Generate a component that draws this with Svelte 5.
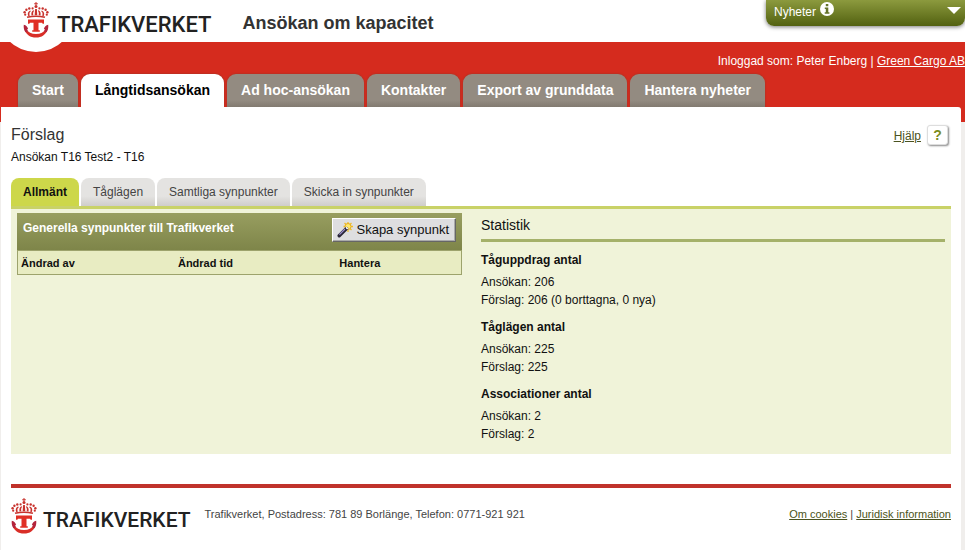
<script>
  const mainTabs = ['Start', 'Långtidsansökan', 'Ad hoc-ansökan', 'Kontakter', 'Export av grunddata', 'Hantera nyheter'];
  const subTabs = ['Allmänt', 'Tåglägen', 'Samtliga synpunkter', 'Skicka in synpunkter'];
  const stats = [
    { title: 'Tåguppdrag antal', rows: ['Ansökan: 206', 'Förslag: 206 (0 borttagna, 0 nya)'] },
    { title: 'Tåglägen antal', rows: ['Ansökan: 225', 'Förslag: 225'] },
    { title: 'Associationer antal', rows: ['Ansökan: 2', 'Förslag: 2'] }
  ];
  let mainActive = $state(1);
  let subActive = $state(0);
</script>

{#snippet crest()}
  <svg class="crest" viewBox="0 0 26 36" width="26" height="36" aria-hidden="true">
    <g fill="#c8322d">
      <path d="M12.500 0h1v1.300h1.300v1h-1.300v1.200h-1V2.300h-1.300v-1h1.300z" />
      <circle cx="13" cy="4.600" r="1.500" />
      <circle cx="9.600" cy="6.400" r="1.100" /><circle cx="16.400" cy="6.400" r="1.100" />
      <circle cx="6.300" cy="6.500" r="1.200" /><circle cx="19.700" cy="6.500" r="1.200" />
      <circle cx="3.400" cy="7.800" r="1.200" /><circle cx="22.600" cy="7.800" r="1.200" />
      <circle cx="1.600" cy="10.200" r="1.200" /><circle cx="24.400" cy="10.200" r="1.200" />
      <circle cx="2.200" cy="12.700" r="1.100" /><circle cx="23.800" cy="12.700" r="1.100" />
      <path d="M12.100 7h1.800l.4 6.300h-2.600z" />
      <path d="M10.200 8.300C8.500 9.500 8 11.500 8.600 13.500l1.800-.2c-.5-1.600-.4-3.400.8-4.600zM15.800 8.300c1.700 1.200 2.200 3.200 1.600 5.200l-1.800-.2c.5-1.600.4-3.400-.8-4.600z" />
      <path d="M7.200 8.600c-2.200.9-3 3-2 5.400l1.700-.3c-.9-1.800-.6-3.600 1-4.500zM18.800 8.600c2.200.9 3 3 2 5.400l-1.700-.3c.9-1.800.6-3.600-1-4.500z" />
      <path d="M3.800 14.500c5.800-1.500 12.600-1.500 18.400 0l-.5 1.500c-5.500-1.200-11.900-1.200-17.400 0z" />
    </g>
    <path d="M5 17.600h16v4.200h-1.300l-.7-1h-3.500v7.400h1.300v1.600H9.200v-1.600h1.300v-7.400H7l-.7 1H5z" fill="#e02f25" />
    <path d="M2.500 26.500c2.600 3.900 6.100 5.500 10.500 5.500s7.900-1.600 10.500-5.500l1 1C22.800 32.700 18.800 35.600 13 35.600S3.200 32.700 1.500 27.500z" fill="#d92e27" />
    <path d="M.8 22.800c2.300.5 3.800 1.900 4.300 4.200l-1 .2.900 2-2.600 1C1 28 .4 25.500.8 22.800zM25.200 22.800c-2.300.5-3.800 1.900-4.300 4.200l1 .2-.9 2 2.600 1c1.400-2.200 2-4.700 1.600-7.400z" fill="#b3243c" />
  </svg>
{/snippet}

<div class="app">
  <header>
    <div class="top">
      <a class="logo" href="#start">{@render crest()}<span>TRAFIKVERKET</span></a>
      <h1>Ansökan om kapacitet</h1>
      <button class="news">
        <span>Nyheter</span>
        <svg width="14" height="14" viewBox="0 0 14 14" aria-hidden="true">
          <circle cx="7" cy="7" r="7" fill="#fff" />
          <path d="M5.800 2h2.500v2.200H5.800zM4.800 5.400h3.500v4.800h1.100v1.500H4.700v-1.500h1.100V6.900h-1z" fill="#65732a" />
        </svg>
        <svg class="arrow" width="14" height="7" viewBox="0 0 14 7" aria-hidden="true"><path d="M0 0h14L7 7z" fill="#fff" /></svg>
      </button>
    </div>
    <div class="band">
      <p class="user">Inloggad som: Peter Enberg | <a href="#foretag">Green Cargo AB</a></p>
      <nav class="main-tabs">
        {#each mainTabs as tab, i}
          <button class:active={mainActive === i} onclick={() => (mainActive = i)}>{tab}</button>
        {/each}
      </nav>
    </div>
  </header>

  <div class="page">
    <main>
      <div class="heading">
        <div>
          <h2>Förslag</h2>
          <p>Ansökan T16 Test2 - T16</p>
        </div>
        <div class="help"><a href="#hjalp">Hjälp</a><button aria-label="Visa hjälp">?</button></div>
      </div>

      <nav class="sub-tabs">
        {#each subTabs as tab, i}
          <button class:active={subActive === i} onclick={() => (subActive = i)}>{tab}</button>
        {/each}
      </nav>

      <div class="panel">
        <section class="comments">
          <div class="bar">
            <h3>Generella synpunkter till Trafikverket</h3>
            <button class="create">
              <svg width="16" height="16" viewBox="0 0 16 16" aria-hidden="true">
                <path d="M11 0v10M6.500 4.500h9.500M7.500 1l7 7M14.500 1l-7 7" stroke="#f0bd2c" stroke-width="1.300" />
                <circle cx="11" cy="4.500" r="3" fill="#ffe96a" stroke="#e6ac20" />
                <path d="M2.200 13.800l7.300-7.300" stroke="#292638" stroke-width="3.400" stroke-linecap="round" />
                <path d="M2.400 12.600l5.600-5.600" stroke="#9c8fd0" stroke-width="1.200" />
                <path d="M9.300 6.700l1.200-1.200" stroke="#fff" stroke-width="2.400" />
              </svg>
              <span>Skapa synpunkt</span>
            </button>
          </div>
          <table>
            <thead><tr><th>Ändrad av</th><th>Ändrad tid</th><th>Hantera</th></tr></thead>
          </table>
        </section>

        <section class="stats">
          <h2>Statistik</h2>
          {#each stats as group}
            <div class="group">
              <h3>{group.title}</h3>
              {#each group.rows as row}<p>{row}</p>{/each}
            </div>
          {/each}
        </section>
      </div>
    </main>

    <footer>
      <a class="logo small" href="#start">{@render crest()}<span>TRAFIKVERKET</span></a>
      <p>Trafikverket, Postadress: 781 89 Borlänge, Telefon: 0771-921 921</p>
      <p class="links"><a href="#cookies">Om cookies</a> | <a href="#juridisk">Juridisk information</a></p>
    </footer>
  </div>
</div>

<style>
  :global(body) { margin: 0; background: #f0eeec; overflow-x: hidden; }
  .app { font: 12px/18px "Liberation Sans", Arial, sans-serif; color: #111; min-height: 100vh; display: flex; flex-direction: column; }
  h1, h2, h3, p { margin: 0; }
  button { font: inherit; color: inherit; border: 0; margin: 0; padding: 0; cursor: pointer; }
  .crest { display: block; flex: none; }

  .top { display: flex; height: 42px; background: #fff; }
  .logo { position: relative; display: flex; gap: 8px; padding: 2px 0 0 23px; color: #222; text-decoration: none; font: 500 22px/46px Roboto, sans-serif; }
  .logo::before { content: ""; position: absolute; left: -3px; top: -26px; width: 78px; height: 78px; border-radius: 50%; background: #fff; }
  .logo > span, .logo :global(svg) { position: relative; }
  h1 { margin-left: 31px; font-size: 18px; line-height: 46px; color: #333; }
  .news { display: flex; gap: 4px; align-items: flex-start; margin-left: auto; width: 199px; height: 26px; padding: 2px 4px 0 8px; color: #fff; background: linear-gradient(#8c9a3e, #526110); border-radius: 0 0 8px 8px; box-shadow: 0 1px 4px #777; line-height: 20px; }
  .arrow { margin: 5px 0 0 auto; }

  .band { background: #d52b1e; height: 80px; }
  .user { color: #fff; text-align: right; padding-top: 10px; height: 22px; white-space: nowrap; }
  .user a { color: #fff; }
  .main-tabs { display: flex; gap: 3px; padding-left: 18px; }
  .main-tabs button { height: 33px; padding: 0 14px 2px; font-size: 14px; font-weight: bold; color: #fff; background: linear-gradient(#938b81 80%, #827a70); border-radius: 9px 9px 0 0; box-shadow: 0 0 2px #8a3a2a; white-space: nowrap; }
  .main-tabs button.active { background: #fff; color: #000; }

  .page { position: relative; flex: 1; margin: -15px 4px 0 1px; padding: 0 10px; background: #fff; border-radius: 0 3px 0 0; }
  .heading { display: flex; justify-content: space-between; padding-top: 18px; height: 53px; }
  .heading h2 { font-size: 16px; line-height: 20px; font-weight: normal; color: #333; }
  .heading p { line-height: 24px; }
  .help { display: flex; gap: 6px; padding-right: 3px; align-items: flex-start; line-height: 22px; }
  .help a { color: #4b5320; }
  .help button { width: 21px; height: 20px; border-radius: 3px; border: 1px solid #ddd; background: #fff; box-shadow: 1px 1px 2px #888; color: #7a8c1e; font-weight: bold; font-size: 14px; line-height: 18px; }

  .sub-tabs { display: flex; gap: 2px; border-bottom: 3px solid #c9d267; }
  .sub-tabs button { height: 28px; padding: 0 12px; color: #444; background: linear-gradient(#e4e3e1 65%, #cfcdca); border-radius: 8px 8px 0 0; white-space: nowrap; }
  .sub-tabs button.active { background: #cdd74a; color: #111; font-weight: bold; }

  .panel { display: flex; gap: 19px; padding: 4px 6px 11px; background: #f0f3d9; }
  .comments { flex: 445; }
  .stats { flex: 464; }
  .bar { display: flex; justify-content: space-between; align-items: flex-start; height: 32px; padding: 5px 6px 0; background: linear-gradient(#989e60, #7e8549); }
  .bar h3 { font-size: 12px; line-height: 20px; color: #fff; }
  .create { display: flex; align-items: center; gap: 3px; height: 24px; padding: 0 6px 0 4px; background: #dedee0; border: 1px solid; border-color: #fff #666 #666 #fff; box-shadow: inset -1px -1px #aaa; font-size: 13px; color: #111; white-space: nowrap; }
  table { width: 100%; table-layout: fixed; border-collapse: collapse; background: #e8ecc2; border: 1px solid #9da36c; }
  th { padding: 0 3px; height: 23px; text-align: left; font-size: 11px; }
  th:first-child { width: 34%; }
  th:nth-child(2) { width: 35%; }

  .stats h2 { font-size: 14px; line-height: 24px; font-weight: normal; border-bottom: 3px solid #a5b16a; margin-bottom: 9px; padding-bottom: 2px; }
  .group h3 { font-size: 12px; line-height: 18px; margin-bottom: 4px; }
  .group { margin-bottom: 9px; }
  .group:last-child { margin-bottom: 0; }

  footer { display: flex; margin-top: 30px; border-top: 4px solid #c0322b; padding-top: 10px; font-size: 11px; line-height: 32px; color: #444; }
  .logo.small { padding: 0; margin-right: 14px; gap: 6px; font-size: 21px; line-height: 45px; }
  .logo.small::before { content: none; }
  .links { margin-left: auto; }
  .links a { color: #4b5320; }
</style>
